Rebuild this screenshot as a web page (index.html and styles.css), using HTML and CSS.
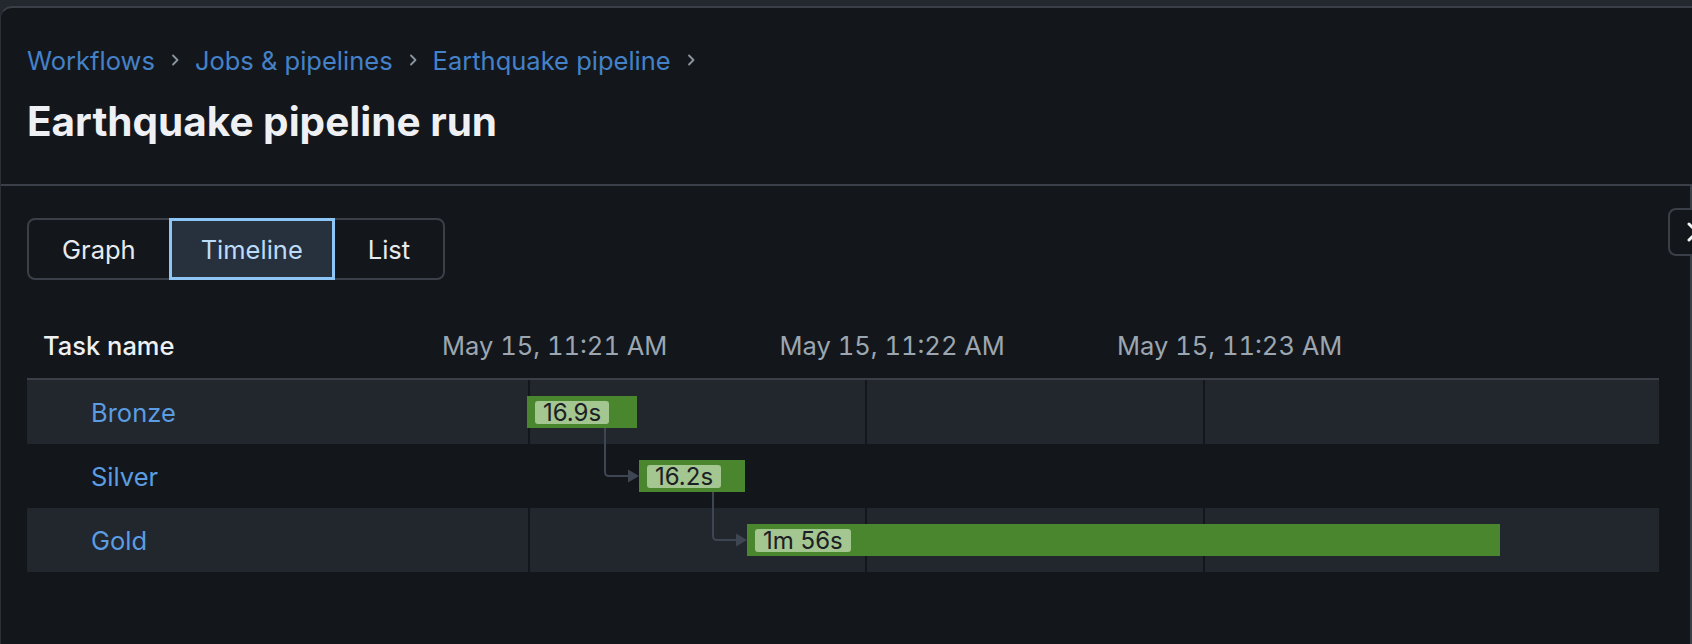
FILE: index.html
```html
<!DOCTYPE html>
<html lang="en">
<head>
<meta charset="utf-8">
<title>Earthquake pipeline run</title>
<link rel="stylesheet" href="styles.css">
</head>
<body>
<div class="card">
  <header class="page-header">
    <nav class="breadcrumb">
      <a class="crumb">Workflows</a>
      <span class="chev"><svg width="8" height="12" viewBox="0 0 8 12"><path d="M2 1.5 6.5 6 2 10.5" fill="none" stroke="currentColor" stroke-width="1.8" stroke-linecap="round" stroke-linejoin="round"/></svg></span>
      <a class="crumb">Jobs &amp; pipelines</a>
      <span class="chev"><svg width="8" height="12" viewBox="0 0 8 12"><path d="M2 1.5 6.5 6 2 10.5" fill="none" stroke="currentColor" stroke-width="1.8" stroke-linecap="round" stroke-linejoin="round"/></svg></span>
      <a class="crumb">Earthquake pipeline</a>
      <span class="chev"><svg width="8" height="12" viewBox="0 0 8 12"><path d="M2 1.5 6.5 6 2 10.5" fill="none" stroke="currentColor" stroke-width="1.8" stroke-linecap="round" stroke-linejoin="round"/></svg></span>
    </nav>
    <h1 class="title">Earthquake pipeline run</h1>
  </header>
  <main class="content">
    <div class="segmented">
      <button class="seg seg-first">Graph</button>
      <button class="seg seg-active">Timeline</button>
      <button class="seg seg-last">List</button>
    </div>
    <section class="timeline">
      <div class="tl-head">
        <div class="tl-head-name">Task name</div>
        <div class="tl-tick">May 15, 11:21 AM</div>
        <div class="tl-tick">May 15, 11:22 AM</div>
        <div class="tl-tick">May 15, 11:23 AM</div>
      </div>
      <div class="tl-body">
        <div class="tl-row stripe">
          <div class="tl-name"><a class="task-link">Bronze</a></div>
          <div class="tl-chart">
            <div class="bar" style="left:-1px;width:110px"><span class="pill">16.9s</span></div>
          </div>
        </div>
        <div class="tl-row">
          <div class="tl-name"><a class="task-link">Silver</a></div>
          <div class="tl-chart">
            <div class="bar" style="left:111px;width:106px"><span class="pill">16.2s</span></div>
          </div>
        </div>
        <div class="tl-row stripe">
          <div class="tl-name"><a class="task-link">Gold</a></div>
          <div class="tl-chart">
            <div class="bar" style="left:219px;width:753px"><span class="pill">1m 56s</span></div>
          </div>
        </div>
        <svg class="connectors" width="1632" height="192" viewBox="0 0 1632 192">
          <g fill="none" stroke="#3d4652" stroke-width="2">
            <path d="M578 48 V92 Q578 96 582 96 H602"/>
            <path d="M686 112 V156 Q686 160 690 160 H710"/>
          </g>
          <g fill="#3d4652">
            <path d="M601 89.5 L612 96 L601 102.5 Z"/>
            <path d="M709 153.5 L720 160 L709 166.5 Z"/>
          </g>
        </svg>
      </div>
    </section>
    <button class="side-toggle" aria-label="Close panel">
      <svg width="22" height="22" viewBox="0 0 22 22"><path d="M3 3 19 19 M19 3 3 19" stroke="#f2f4f6" stroke-width="3" stroke-linecap="round"/></svg>
    </button>
  </main>
</div>
</body>
</html>
```
FILE: styles.css
```css
* { box-sizing: border-box; }

html, body {
  margin: 0;
  height: 100%;
}

body {
  background: #23272e;
  font-family: Inter, "Noto Sans", "Liberation Sans", sans-serif;
  color: #e8ebee;
  overflow: hidden;
}

.card {
  margin-top: 6px;
  min-height: 638px;
  background: #13171c;
  border-top: 2px solid #3b4048;
  border-left: 1px solid #2c3138;
  border-top-left-radius: 12px;
}

.page-header {
  height: 178px;
  padding: 36px 26px 0 26px;
  border-bottom: 2px solid #3b4048;
}

.breadcrumb {
  display: flex;
  align-items: center;
  height: 32px;
  font-size: 25.5px;
}

.crumb {
  color: #4581c8;
  text-decoration: none;
}

.chev {
  display: flex;
  align-items: center;
  color: #8c96a1;
  margin: 0 16px 0 16px;
}

.title {
  margin: 22px 0 0 0;
  height: 48px;
  line-height: 48px;
  font-size: 40.5px;
  font-weight: 700;
  color: #eef0f3;
}

.content {
  position: relative;
  padding: 32px 32px 0 26px;
  border-right: 2px solid #3b4048;
  min-height: 458px;
}

.segmented {
  display: flex;
  height: 62px;
}

.seg {
  height: 62px;
  padding: 0 29px;
  margin: 0 0 0 -2px;
  background: #13171c;
  border: 2px solid #3b4048;
  color: #e8ebee;
  font-family: inherit;
  font-size: 25.5px;
}

.seg-first {
  margin-left: 0;
  border-radius: 8px 0 0 8px;
  padding: 0 33px;
}

.seg-last {
  border-radius: 0 8px 8px 0;
  padding: 0 33px;
}

.seg-active {
  position: relative;
  z-index: 1;
  background: #27313d;
  border: 3px solid #8ec5f7;
  color: #bcdcf9;
}

.timeline {
  margin-top: 32px;
  width: 1632px;
}

.tl-head {
  display: grid;
  grid-template-columns: 415px repeat(3, 337.5px);
  align-items: center;
  height: 66px;
  font-size: 25.5px;
}

.tl-head-name {
  padding-left: 16px;
  font-weight: 500;
  color: #eef0f3;
}

.tl-tick {
  color: #9ca6b1;
  font-variant-numeric: tabular-nums;
  white-space: nowrap;
}

.tl-body {
  position: relative;
  border-top: 2px solid #3b4048;
}

.tl-row {
  display: grid;
  grid-template-columns: 501px 1fr;
  height: 64px;
}

.tl-row.stripe {
  background: #22262d;
}

.tl-row.stripe .tl-chart {
  background-image:
    linear-gradient(#13161a, #13161a),
    linear-gradient(#13161a, #13161a),
    linear-gradient(#13161a, #13161a);
  background-size: 2px 100%;
  background-position: 0 0, 337px 0, 675px 0;
  background-repeat: no-repeat;
}

.tl-name {
  display: flex;
  align-items: center;
  padding-left: 64px;
  font-size: 25.5px;
}

.task-link {
  color: #5a9de2;
  text-decoration: none;
}

.tl-chart {
  position: relative;
}

.bar {
  position: absolute;
  top: 16px;
  height: 32px;
  background: #4a862d;
  display: flex;
  align-items: center;
  padding-left: 8px;
}

.pill {
  display: inline-block;
  height: 23px;
  line-height: 23px;
  padding: 0 8px;
  border-radius: 3px;
  background: #a4c690;
  color: #1b2025;
  font-size: 24px;
  white-space: nowrap;
}

.connectors {
  position: absolute;
  top: 0;
  left: 0;
  pointer-events: none;
}

.side-toggle {
  position: absolute;
  top: 22px;
  left: 1667px;
  width: 48px;
  height: 48px;
  padding: 0 0 0 16px;
  background: #13171c;
  border: 2px solid #3b4048;
  border-radius: 8px;
  display: flex;
  align-items: center;
}
```
